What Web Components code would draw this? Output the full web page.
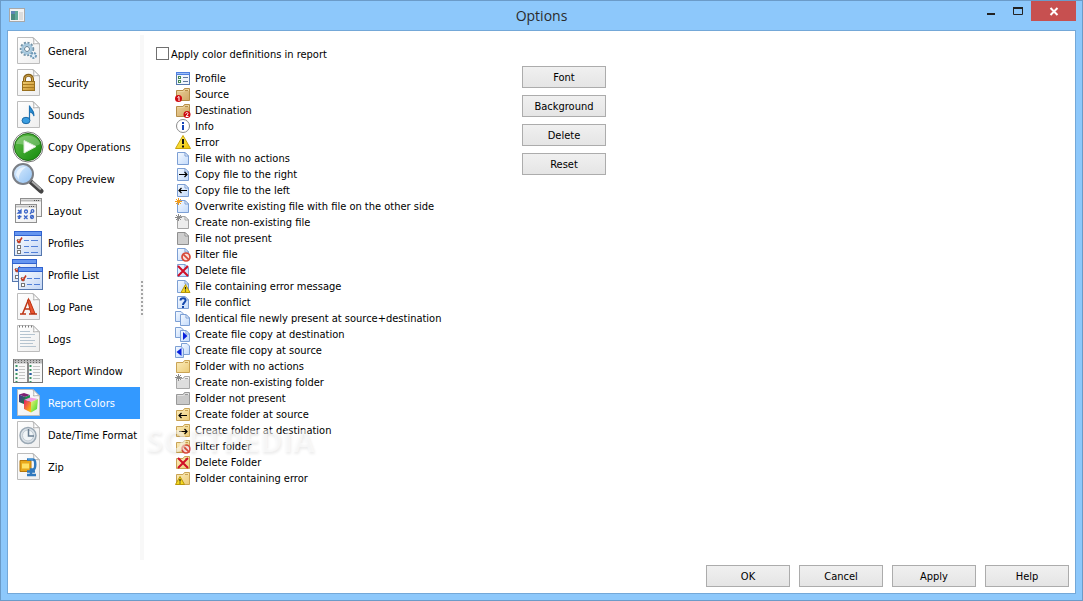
<!DOCTYPE html>
<html lang="en">
<head>
<meta charset="utf-8">
<meta name="viewport" content="width=device-width, initial-scale=1">
<title>Options</title>
<style>
  body {
    margin: 0;
    font: 11px/18px "DejaVu Sans Condensed", "Noto Sans", sans-serif;
    color: #000;
  }
</style>
</head>
<body>
<options-window></options-window>

<script>
// shared pieces that several icons are built from
const page = `
  <path d="M5.500 2.500H21L27.500 9V28.500H5.500Z" fill="url(#paper)" stroke="#bcbcbc"/>
  <path d="M21 2.500C22 5 22 7 21.500 9C24 8.500 26 8.500 27.500 9Z" fill="#fff" stroke="#b0b0b0"/>`
const listWindow = (x, y, w, h) => `
  <rect x="${x + 0.5}" y="${y + 0.5}" width="${w - 1}" height="${h - 1}" fill="url(#pane)" stroke="#5577ae"/>
  <rect x="${x}" y="${y}" width="${w}" height="5" fill="#2f62d0"/>
  <rect x="${x + 1}" y="${y + 1}" width="${w - 2}" height="3" fill="#6596f0"/>`
const tick = (x, y) => `
  <rect x="${x + 0.5}" y="${y + 0.5}" width="3" height="3" fill="#fff" stroke="#999"/>
  <path d="M${x} ${y + 1}l2 2.500l3-5" fill="none" stroke="#c8371e" stroke-width="1.500"/>`
const box = (x, y) => `<rect x="${x + 0.5}" y="${y + 0.5}" width="3" height="3" fill="#fff" stroke="#777"/>`

const file = (fill = 'url(#sheet)', line = '#7c9fd4') => `
  <path d="M2.500 2.500H10L13.500 6V14.500H2.500Z" fill="${fill}" stroke="${line}"/>
  <path d="M10 2.500V6H13.500Z" fill="#fff" stroke="${line}"/>`
const twoFiles = `
  <path d="M.500 1.500H6L8.500 4V11.500H.500Z" fill="url(#sheet)" stroke="#7c9fd4"/>
  <path d="M5.500 4.500H11L14.500 8V15.500H5.500Z" fill="url(#sheet)" stroke="#7c9fd4"/>
  <path d="M11 4.500V8H14.500Z" fill="#fff" stroke="#7c9fd4"/>`
const folder = (fill = 'url(#manila)', line = '#c9a354', tab = '#f7e4a8') => `
  <path d="M1.500 4.500H8L9.500 2.500H14.500V14.500H1.500Z" fill="${fill}" stroke="${line}"/>
  <path d="M10 3.500H14M2.500 5.500H8.500L10 4.500H14" fill="none" stroke="${tab}"/>
  <path d="M10 4.500H13" stroke="${line}"/>`
const brownFolder = folder('url(#brown)', '#b58d48', '#ecd5a0')
const arrowRight = '<path d="M4 8.500H12M9.500 6L12 8.500L9.500 11" fill="none" stroke="#000" stroke-width="1.200"/>'
const arrowLeft = '<path d="M12 8.500H4M6.500 6L4 8.500L6.500 11" fill="none" stroke="#000" stroke-width="1.200"/>'
const spark = (color) => `<path d="M3.500 0V7M0 3.500H7M1 1L6 6M6 1L1 6" stroke="${color}"/>`
const banned = `
  <circle cx="11" cy="11" r="4" fill="#f9e0dc" stroke="#d8493a" stroke-width="1.700"/>
  <path d="M8.300 8.300L13.700 13.700" stroke="#d8493a" stroke-width="1.700"/>`
const cross = '<path d="M3 4L13 14M13 4L3 14" stroke="#d00f28" stroke-width="2"/>'
const warn = (x) => `
  <path d="M${x + 4.5} 6.500L${x + 9} 14.500H${x}Z" fill="#f5d822" stroke="#b99708"/>
  <path d="M${x + 4.5} 9V11.500M${x + 4.5} 12.500V13.500" stroke="#222" stroke-width="1.200"/>`
const badge = (x, mark) => `
  <circle cx="${x}" cy="12.500" r="3.500" fill="#cf0a12"/>
  <path d="${mark}" fill="none" stroke="#fff"/>`

const ICONS = {
  // 32px, navigation
  general: page + `
    <circle cx="15" cy="14" r="6" fill="none" stroke="#7191a6" stroke-width="2.500" stroke-dasharray="2 1.500"/>
    <circle cx="15" cy="14" r="4.500" fill="#e8f2f8" stroke="#a3c6dc" stroke-width="2.500"/>
    <circle cx="15" cy="14" r="2.500" fill="#fff" stroke="#5c7d93"/>
    <circle cx="21.500" cy="20.500" r="2.500" fill="#e1effa" stroke="#6f9ab8" stroke-width="2" stroke-dasharray="2 1"/>`,
  security: page + `
    <path d="M12.500 15V12C12.500 7 20.500 7 20.500 12V15" fill="none" stroke="#866018" stroke-width="3"/>
    <path d="M12.500 15V12C12.500 7.500 20.500 7.500 20.500 12V15" fill="none" stroke="#d9ae53"/>
    <rect x="10.500" y="14.500" width="12" height="9" fill="url(#gold)" stroke="#99701e"/>
    <path d="M11 17.500H22M11 20.500H22" stroke="#a97b22"/>`,
  sounds: page + `
    <path d="M17.500 21V6.500C18 10 22.500 11 22 17C21 14 19 13 17.500 13" fill="#2e91d6" stroke="#1f73b3" stroke-width="1.200"/>
    <ellipse cx="14" cy="21.500" rx="4" ry="3.200" fill="#3a9de0" stroke="#1d6aa6"/>`,
  play: `
    <circle cx="16" cy="16" r="15" fill="#fff" stroke="#777"/>
    <circle cx="16" cy="16" r="13.500" fill="url(#green)" stroke="#1c6c12"/>
    <path d="M4 13C6 2 26 2 28 13C22 18 10 12 4 13Z" fill="#fff" opacity=".25"/>
    <path d="M12 9.500L24 15.500L12 22Z" fill="#fff" stroke="#d9ecd5"/>`,
  preview: `
    <path d="M19 19L29 28" stroke="#444" stroke-width="5" stroke-linecap="round"/>
    <path d="M20 18.500L29 26.500" stroke="#aaa" stroke-width="2"/>
    <circle cx="11" cy="11" r="10" fill="url(#lens)" stroke="#7b7f86" stroke-width="2"/>
    <path d="M4 12C5 5 10 4 14 4C10 7 6 12 7 17Z" fill="#fff" opacity=".6"/>`,
  layout: `
    <rect x="8.500" y="3.500" width="21" height="18" fill="url(#paper)" stroke="#8f8f8f"/>
    <path d="M9 5.500H29" stroke="#bbb" stroke-width="2"/><path d="M22 5.500H28" stroke="#555" stroke-dasharray="1 1"/>
    <rect x="3.500" y="9.500" width="21" height="18" fill="url(#paper)" stroke="#8f8f8f"/>
    <path d="M4 11.500H24" stroke="#c4c4c4" stroke-width="2"/><path d="M17 11.500H23" stroke="#555" stroke-dasharray="1 1"/>
    <g fill="none" stroke="#3d66c8" stroke-width="1.300">
      <path d="M6 15L9 18M9 15V18H6Z"/><circle cx="14" cy="16.500" r="1.500"/><circle cx="20.500" cy="16" r="1.300"/><path d="M19.500 17L18 19"/>
      <path d="M5.500 21.500H9.500M7.500 20V24M6 23.500L9 21.500"/><path d="M12 20.500L15.500 24M15.500 20.500L12 24"/><circle cx="20" cy="22" r="1.500"/><path d="M19 23L21 21"/>
    </g>`,
  profiles: listWindow(2, 4, 28, 25) + tick(5, 12) + box(5, 18) + box(5, 23) + `
    <path d="M12 13.500H17M19 13.500H26M12 19.500H17M19 19.500H26M12 25.500H17M19 25.500H26" stroke="#5280d8"/>`,
  profileList: listWindow(0, 0, 25, 23) + tick(3, 9) + box(3, 16) +
    listWindow(6, 8, 25, 23) + tick(9, 18) + box(9, 24) + `
    <path d="M15 19.500H20M22 19.500H28M15 25.500H20M22 25.500H28" stroke="#5280d8"/>`,
  logPane: page + `
    <path d="M8 23H14M17 23H25M10.500 23L16.500 8.500L22 23M12.500 18H20" fill="none" stroke="#bd3514" stroke-width="1.500"/>
    <path d="M15.500 9H17.500L23 22.500H19Z" fill="#ea5530" stroke="#bd3514"/>`,
  logs: page + `
    <path d="M7 3.500H22" stroke="#777" stroke-width="2" stroke-dasharray="1 2"/>
    <path d="M8 8.500H18M8 11.500H23M8 14.500H19M8 17.500H23M8 20.500H21M8 23.500H24" stroke="#b5c4d0"/>`,
  reportWindow: `
    <rect x="1.500" y="4.500" width="29" height="23" fill="#f8f8f8" stroke="#777"/>
    <path d="M2 6.500H30" stroke="#bbb" stroke-width="4"/>
    <path d="M3 5.500H29M3 7.500H29" stroke="#666" stroke-dasharray="1 2"/>
    <path d="M16 8V27" stroke="#888" stroke-width="2"/>
    <path d="M4.500 10V27M18.500 10V27" stroke="#3b9664" stroke-width="2" stroke-dasharray="2 2"/>
    <path d="M4.500 14V16M18.500 18V20" stroke="#2c55ab" stroke-width="2"/>
    <path d="M7 11.500H13M7 14.500H13M7 17.500H13M7 20.500H13M7 23.500H13M21 11.500H28M21 14.500H28M21 17.500H28M21 20.500H28M21 23.500H28" stroke="#c4c4c4"/>`,
  reportColors: page + `
    <path d="M7 7.500L12 6L18 8L13 10Z" fill="#7d1e74"/>
    <path d="M7 7.500L13 10V17.500L7 15Z" fill="url(#dark)"/>
    <path d="M13 10L18 8V15L13 17.500Z" fill="#1d8a4e"/>
    <path d="M12 13L18 10.500L26 12L19 15Z" fill="#f29be0"/>
    <path d="M12 13L19 15V25.500L12 22Z" fill="url(#warm)"/>
    <path d="M19 15L26 12L25 22L19 25.500Z" fill="url(#lime)"/>`,
  clock: page + `
    <circle cx="16" cy="16.500" r="8" fill="#dbe2e8" stroke="#9aa8b4" stroke-width="1.500"/>
    <circle cx="16" cy="16.500" r="5.500" fill="#f0f4f7" stroke="#c0cad2"/>
    <path d="M16.500 10V17H22" fill="none" stroke="#6a7f93" stroke-width="1.500"/>`,
  zip: page + `
    <path d="M8 9.500H19V20.500H8Z" fill="#e9a81a" stroke="#b5770c"/>
    <path d="M10 12.500H17V17.500H10Z" fill="#ffe166"/>
    <path d="M15 8.500H21C24 8.500 24 18.500 21 18.500H19V23M15 24H24M15 20.500H23" fill="none" stroke="#2f78bd" stroke-width="2.500"/>
    <path d="M16 8H21" stroke="#6db3ea"/>`,

  // 16px, report entries
  profile: `
    <rect x="1.500" y="2.500" width="13" height="12" fill="#f0f5fc" stroke="#5879b0"/>
    <path d="M1 3.500H15" stroke="#4e7fe0" stroke-width="3"/><path d="M2 3.500H14" stroke="#9cbdf5"/>
    <rect x="3.500" y="6.500" width="2" height="2" fill="#fff" stroke="#488a55"/>
    <rect x="3.500" y="10.500" width="2" height="2" fill="#fff" stroke="#488a55"/>
    <path d="M8 7.500H13M8 11.500H13" stroke="#6077a0"/>`,
  source: brownFolder + badge(3.5, 'M2.500 11.500L4 10.500V15'),
  destination: brownFolder + badge(12, 'M10.500 11.500C11 10 13.500 10.500 13 12L11 14.500H13.500'),
  info: `
    <circle cx="8" cy="8" r="6.500" fill="#fff" stroke="#8b8b8b"/>
    <path d="M8 7V12M8 4V6" stroke="#1746b8" stroke-width="2"/>`,
  error: `
    <path d="M8 1.500L15.500 14.500H.500Z" fill="url(#yellow)" stroke="#c9a40c"/>
    <path d="M8 5V10M8 11.500V13.500" stroke="#111" stroke-width="2"/>`,
  file: file(),
  fileRight: file() + arrowRight,
  fileLeft: file() + arrowLeft,
  fileOverwrite: file() + spark('#f09a1a'),
  fileNew: file('#ededed', '#a5a5a5') + spark('#8a8a8a'),
  fileMissing: file('#cecece', '#8f8f8f'),
  fileFilter: file() + banned,
  fileDelete: file() + cross,
  fileError: file() + warn(6),
  fileConflict: file() + '<path d="M5.500 6.500C5.500 3.500 11 3.500 10.500 6.500C10.500 8.500 8 8.500 8 11M8 12V14" fill="none" stroke="#1548ad" stroke-width="2"/>',
  fileTwin: twoFiles,
  fileCopyRight: twoFiles + '<path d="M8 6V14L12.500 10Z" fill="#0820dc"/>',
  fileCopyLeft: `
    <path d="M6.500 1.500H12L14.500 4V12.500H6.500Z" fill="url(#sheet)" stroke="#7c9fd4"/>
    <path d="M.500 4.500H6L8.500 7V15.500H.500Z" fill="url(#sheet)" stroke="#7c9fd4"/>
    <path d="M6.500 6V14L1.500 10Z" fill="#0820dc"/>`,
  folder: folder(),
  folderNew: folder('#dedede', '#a8a8a8', '#f4f4f4') + spark('#8a8a8a'),
  folderMissing: folder('#c9c9c9', '#999', '#e2e2e2'),
  folderLeft: folder() + '<g transform="translate(0 1)">' + arrowLeft + '</g>',
  folderRight: folder() + '<g transform="translate(0 1)">' + arrowRight + '</g>',
  folderFilter: folder() + banned,
  folderDelete: folder() + cross,
  folderError: folder() + warn(0.5)
}

const gradient = (id, from, to) => `
  <linearGradient id="${id}" x2="1" y2="1"><stop stop-color="${from}"/><stop offset="1" stop-color="${to}"/></linearGradient>`

const DEFS = `<defs>
  ${gradient('paper', '#ffffff', '#eeeeee')}
  ${gradient('pane', '#ffffff', '#c3d6f5')}
  ${gradient('sheet', '#f6faff', '#c2dafb')}
  ${gradient('manila', '#fcedbd', '#ebcb78')}
  ${gradient('brown', '#ecd29b', '#cfa765')}
  ${gradient('gold', '#f2cf73', '#c48f2c')}
  ${gradient('green', '#63c04c', '#128a0a')}
  ${gradient('lens', '#e2f1ff', '#8fc0f3')}
  ${gradient('yellow', '#fff06a', '#f0c400')}
  ${gradient('dark', '#4a2a9c', '#16803c')}
  ${gradient('warm', '#e8186c', '#ffd400')}
  ${gradient('lime', '#f6f27a', '#35d822')}
</defs>`

class UiIcon extends HTMLElement {
  connectedCallback () {
    const size = this.getAttribute('size') || 16
    this.attachShadow({ mode: 'open' }).innerHTML = `
      <style>
        :host { display: block; flex: none; }
        svg { display: block; }
      </style>
      <svg width="${size}" height="${size}" viewBox="0 0 ${size} ${size}" aria-hidden="true">
        ${DEFS}${ICONS[this.getAttribute('name')]}
      </svg>
    `
  }
}
customElements.define('ui-icon', UiIcon)

class TitleBar extends HTMLElement {
  constructor () {
    super()
    this.attachShadow({ mode: 'open' }).innerHTML = `
      <style>
        :host {
          display: grid;
          grid-template-columns: 1fr auto 1fr;
          height: 29px;
        }
        .app { margin: 7px 0 0 2px; }
        h1 {
          margin: 0;
          font: 14px/29px "Open Sans", sans-serif;
          color: #2b2b2b;
        }
        .controls {
          display: flex;
          justify-content: flex-end;
          align-items: flex-start;
        }
        button {
          width: 27px;
          height: 20px;
          padding: 0;
          border: 0;
          background: none;
        }
        button.close {
          width: 45px;
          background: #c75050;
        }
        svg { display: block; margin: 0 auto; }
      </style>
      <svg class="app" width="16" height="15" viewBox="0 0 16 15" aria-hidden="true">
        <rect x=".5" y=".5" width="15" height="13" fill="#f3f3f3" stroke="#a8a8a8"/>
        <path d="M6 3H9V12H6Z" fill="#5fa898"/>
        <path d="M2 3H6V12H2Z" fill="#4b8a80"/>
        <path d="M2 3H6V6H2Z" fill="#5f86b5"/>
        <path d="M10 4H14V12H10Z" fill="#dcdcdc"/>
      </svg>
      <h1><slot></slot></h1>
      <div class="controls">
        <button aria-label="Minimize"><svg width="12" height="20"><path d="M2 13H10" stroke="#222" stroke-width="2"/></svg></button>
        <button aria-label="Maximize"><svg width="12" height="20"><path d="M1.500 6V13.500H10.500V6" fill="none" stroke="#222"/><path d="M1 7H11" stroke="#222" stroke-width="2"/></svg></button>
        <button class="close" aria-label="Close"><svg width="10" height="20"><path d="M1.500 7L8.500 14M8.500 7L1.500 14" stroke="#fff" stroke-width="2"/></svg></button>
      </div>
    `
  }
}
customElements.define('title-bar', TitleBar)

class NavItem extends HTMLElement {
  connectedCallback () {
    this.attachShadow({ mode: 'open' }).innerHTML = `
      <style>
        :host { display: block; }
        button {
          display: flex;
          align-items: center;
          gap: 4px;
          width: 100%;
          height: 32px;
          padding: 0;
          border: 0;
          background: none;
          font: inherit;
          color: inherit;
          white-space: nowrap;
        }
        span { padding-top: 2px; }
        :host([selected]) button {
          background: #3399ff;
          color: #fff;
        }
      </style>
      <button>
        <ui-icon size="32" name="${this.getAttribute('icon')}"></ui-icon>
        <span><slot></slot></span>
      </button>
    `
  }
}
customElements.define('nav-item', NavItem)

class ReportEntry extends HTMLElement {
  connectedCallback () {
    this.setAttribute('role', 'listitem')
    this.attachShadow({ mode: 'open' }).innerHTML = `
      <style>
        :host {
          display: flex;
          gap: 4px;
          height: 16px;
          white-space: nowrap;
        }
      </style>
      <ui-icon name="${this.getAttribute('icon')}"></ui-icon>
      <span><slot></slot></span>
    `
  }
}
customElements.define('report-entry', ReportEntry)

class PushButton extends HTMLElement {
  constructor () {
    super()
    this.attachShadow({ mode: 'open' }).innerHTML = `
      <style>
        :host { display: block; }
        button {
          display: block;
          width: 84px;
          height: 22px;
          padding: 2px 0 0;
          border: 1px solid #acacac;
          background: linear-gradient(#f0f0f0, #e5e5e5);
          font: inherit;
          color: inherit;
        }
        button:hover { border-color: #7eb4ea; }
      </style>
      <button><slot></slot></button>
    `
  }
}
customElements.define('push-button', PushButton)

class CheckBox extends HTMLElement {
  constructor () {
    super()
    this.attachShadow({ mode: 'open' }).innerHTML = `
      <style>
        :host { display: block; }
        label {
          display: flex;
          align-items: flex-start;
          gap: 2px;
          height: 14px;
          line-height: 16px;
          white-space: nowrap;
        }
        input {
          appearance: none;
          flex: none;
          width: 13px;
          height: 13px;
          margin: 0;
          border: 1px solid #707070;
          background: #fff;
        }
        input:checked { background: #3399ff; box-shadow: inset 0 0 0 2px #fff; }
      </style>
      <label><input type="checkbox"><span><slot></slot></span></label>
    `
  }
}
customElements.define('check-box', CheckBox)

const NAV = [
  ['general', 'General'],
  ['security', 'Security'],
  ['sounds', 'Sounds'],
  ['play', 'Copy Operations'],
  ['preview', 'Copy Preview'],
  ['layout', 'Layout'],
  ['profiles', 'Profiles'],
  ['profileList', 'Profile List'],
  ['logPane', 'Log Pane'],
  ['logs', 'Logs'],
  ['reportWindow', 'Report Window'],
  ['reportColors', 'Report Colors'],
  ['clock', 'Date/Time Format'],
  ['zip', 'Zip']
]

const ENTRIES = [
  ['profile', 'Profile'],
  ['source', 'Source'],
  ['destination', 'Destination'],
  ['info', 'Info'],
  ['error', 'Error'],
  ['file', 'File with no actions'],
  ['fileRight', 'Copy file to the right'],
  ['fileLeft', 'Copy file to the left'],
  ['fileOverwrite', 'Overwrite existing file with file on the other side'],
  ['fileNew', 'Create non-existing file'],
  ['fileMissing', 'File not present'],
  ['fileFilter', 'Filter file'],
  ['fileDelete', 'Delete file'],
  ['fileError', 'File containing error message'],
  ['fileConflict', 'File conflict'],
  ['fileTwin', 'Identical file newly present at source+destination'],
  ['fileCopyRight', 'Create file copy at destination'],
  ['fileCopyLeft', 'Create file copy at source'],
  ['folder', 'Folder with no actions'],
  ['folderNew', 'Create non-existing folder'],
  ['folderMissing', 'Folder not present'],
  ['folderLeft', 'Create folder at source'],
  ['folderRight', 'Create folder at destination'],
  ['folderFilter', 'Filter folder'],
  ['folderDelete', 'Delete Folder'],
  ['folderError', 'Folder containing error']
]

class OptionsWindow extends HTMLElement {
  constructor () {
    super()
    this.attachShadow({ mode: 'open' }).innerHTML = `
      <style>
        :host {
          display: flex;
          flex-direction: column;
          box-sizing: border-box;
          min-height: 100vh;
          padding: 0 6px 6px;
          border: 1px solid #6b9bc8;
          background: #8dc8fb;
        }
        .client {
          flex: 1;
          display: flex;
          flex-direction: column;
          gap: 5px;
          padding: 4px 6px 6px 4px;
          border: 1px solid #74a8d8;
          background: #fff;
        }
        main {
          flex: 1;
          display: flex;
        }
        nav { flex: 0 0 128px; }
        .splitter {
          flex: 0 0 4px;
          display: flex;
          align-items: center;
          justify-content: center;
          background: #f8f8f8;
        }
        .splitter::before {
          content: "";
          width: 2px;
          height: 34px;
          background: repeating-linear-gradient(#a4a4a4 0 2px, transparent 2px 4px);
        }
        .panel {
          flex: 1;
          display: flex;
          padding: 12px 0 0 12px;
        }
        .colors { flex: 0 0 366px; }
        .list {
          position: relative;
          margin-top: 9px;
          padding-left: 19px;
        }
        .actions {
          display: flex;
          flex-direction: column;
          gap: 7px;
          padding-top: 19px;
        }
        .watermark {
          position: absolute;
          left: -10px;
          bottom: 28px;
          font: bold 31px/36px "Open Sans", sans-serif;
          color: rgba(255, 255, 255, .5);
          text-shadow: 1px 2px 3px rgba(0, 0, 0, .08);
          pointer-events: none;
        }
        footer {
          display: flex;
          justify-content: flex-end;
          gap: 9px;
        }
      </style>
      <title-bar>Options</title-bar>
      <div class="client">
        <main>
          <nav>
            ${NAV.map(([icon, text]) => `<nav-item icon="${icon}"${text === 'Report Colors' ? ' selected' : ''}>${text}</nav-item>`).join('')}
          </nav>
          <div class="splitter" role="separator"></div>
          <section class="panel">
            <div class="colors">
              <check-box>Apply color definitions in report</check-box>
              <div class="list" role="list">
                ${ENTRIES.map(([icon, text]) => `<report-entry icon="${icon}">${text}</report-entry>`).join('')}
                <span class="watermark">SOFTPEDIA</span>
              </div>
            </div>
            <div class="actions">
              <push-button>Font</push-button>
              <push-button>Background</push-button>
              <push-button>Delete</push-button>
              <push-button>Reset</push-button>
            </div>
          </section>
        </main>
        <footer>
          <push-button>OK</push-button>
          <push-button>Cancel</push-button>
          <push-button>Apply</push-button>
          <push-button>Help</push-button>
        </footer>
      </div>
    `
  }
}
customElements.define('options-window', OptionsWindow)
</script>
</body>
</html>
